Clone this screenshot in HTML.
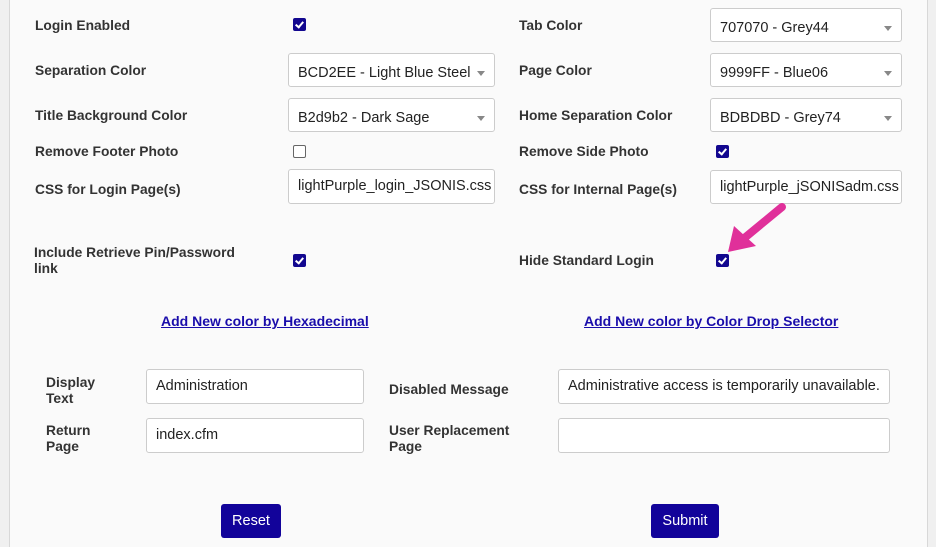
<!DOCTYPE html>
<html><head><meta charset="utf-8"><style>
body{margin:0;width:936px;height:547px;background:#f0f0f0;font-family:"Liberation Sans",Arial,sans-serif;position:relative;overflow:hidden}
.panel{position:absolute;left:9px;top:0;width:917px;height:547px;background:#fafafa;border-left:1px solid #d8d8d8;border-right:1px solid #d8d8d8}
.l{position:absolute;font-weight:bold;font-size:13.8px;color:#333;line-height:16px;margin-top:1px}
.in{position:absolute;box-sizing:border-box;background:#fff;border:1px solid #ccc;border-radius:3px;font-size:14.5px;color:#222;padding-left:9px;white-space:nowrap;overflow:hidden}
.sel:after{content:"";position:absolute;right:9px;top:50%;margin-top:1px;border-left:4px solid transparent;border-right:4px solid transparent;border-top:5px solid #888}
.cb{position:absolute;width:13px;height:13px;box-sizing:border-box;border-radius:2px}
.on{background:#12078f}
.on:after{content:"";position:absolute;left:4px;top:1.5px;width:3px;height:6px;border:solid #fff;border-width:0 2px 2px 0;transform:rotate(40deg)}
.off{border:1px solid #666;background:#fff}
.a{position:absolute;font-weight:bold;font-size:14px;color:#1a0dab;text-decoration:underline}
.btn{position:absolute;background:#12039a;color:#fff;font-size:14.5px;border-radius:3px;text-align:center;line-height:35px;height:34px}
</style></head><body>
<div class="panel"></div>
<div class="l" style="left:35px;top:17px">Login Enabled</div>
<div class="cb on" style="left:293px;top:18px"></div>
<div class="l" style="left:35px;top:62px">Separation Color</div>
<div class="in sel" style="left:288px;top:53px;width:207px;height:34px;line-height:38px">BCD2EE - Light Blue Steel</div>
<div class="l" style="left:35px;top:107px">Title Background Color</div>
<div class="in sel" style="left:288px;top:98px;width:207px;height:34px;line-height:38px">B2d9b2 - Dark Sage</div>
<div class="l" style="left:35px;top:143px">Remove Footer Photo</div>
<div class="cb off" style="left:293px;top:145px"></div>
<div class="l" style="left:35px;top:181px">CSS for Login Page(s)</div>
<div class="in" style="left:288px;top:169px;width:207px;height:35px;line-height:33px">lightPurple_login_JSONIS.css</div>
<div class="l" style="left:34px;top:244px;width:220px">Include Retrieve Pin/Password link</div>
<div class="cb on" style="left:293px;top:254px"></div>

<div class="l" style="left:519px;top:17px">Tab Color</div>
<div class="in sel" style="left:710px;top:8px;width:192px;height:34px;line-height:38px">707070 - Grey44</div>
<div class="l" style="left:519px;top:62px">Page Color</div>
<div class="in sel" style="left:710px;top:53px;width:192px;height:34px;line-height:38px">9999FF - Blue06</div>
<div class="l" style="left:519px;top:107px">Home Separation Color</div>
<div class="in sel" style="left:710px;top:98px;width:192px;height:34px;line-height:38px">BDBDBD - Grey74</div>
<div class="l" style="left:519px;top:143px">Remove Side Photo</div>
<div class="cb on" style="left:716px;top:145px"></div>
<div class="l" style="left:519px;top:181px">CSS for Internal Page(s)</div>
<div class="in" style="left:710px;top:170px;width:192px;height:34px;line-height:33px">lightPurple_jSONISadm.css</div>
<div class="l" style="left:519px;top:252px">Hide Standard Login</div>
<div class="cb on" style="left:716px;top:254px"></div>
<svg style="position:absolute;left:720px;top:198px" width="70" height="60"><line x1="62" y1="9" x2="22" y2="42" stroke="#e0309a" stroke-width="8" stroke-linecap="round"/><polygon points="8,54 14,28 36,48" fill="#e0309a"/></svg>

<div class="a" style="left:161px;top:313px">Add New color by Hexadecimal</div>
<div class="a" style="left:584px;top:313px">Add New color by Color Drop Selector</div>

<div class="l" style="left:46px;top:374px">Display<br>Text</div>
<div class="in" style="left:146px;top:369px;width:218px;height:35px;line-height:33px">Administration</div>
<div class="l" style="left:389px;top:381px">Disabled Message</div>
<div class="in" style="left:558px;top:369px;width:332px;height:35px;line-height:33px">Administrative access is temporarily unavailable.</div>
<div class="l" style="left:46px;top:422px">Return<br>Page</div>
<div class="in" style="left:146px;top:418px;width:218px;height:35px;line-height:33px">index.cfm</div>
<div class="l" style="left:389px;top:422px">User Replacement<br>Page</div>
<div class="in" style="left:558px;top:418px;width:332px;height:35px"></div>

<div class="btn" style="left:221px;top:504px;width:60px">Reset</div>
<div class="btn" style="left:651px;top:504px;width:68px">Submit</div>
</body></html>
